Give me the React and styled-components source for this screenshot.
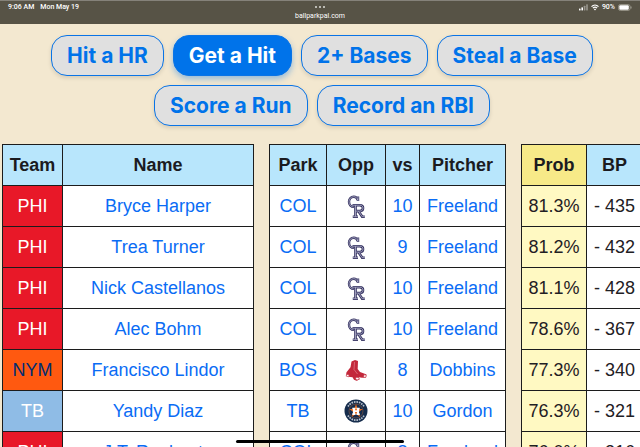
import React from "react";
import styled, { createGlobalStyle } from "styled-components";

const GlobalStyle = createGlobalStyle`
  * {
    box-sizing: border-box;
  }

  body {
    margin: 0;
    background: #f3e8d0;
    font-family: "Liberation Sans", Helvetica, Arial, sans-serif;
  }
`;

const Screen = styled.div`
  position: relative;
  display: flex;
  flex-direction: column;
  height: 100vh;
  overflow: hidden;
`;

const StatusBar = styled.header`
  display: grid;
  grid-template-columns: 1fr auto 1fr;
  flex: none;
  height: 24px;
  padding: 0 8px;
  border-top: 1px solid #85827a;
  background: #575346;
  color: #fff;
  font: 500 7px/12px Roboto, sans-serif;
`;

const Clock = styled.div`
  display: flex;
  gap: 6px;
`;

const Address = styled.div`
  display: flex;
  flex-direction: column;
  align-items: center;
  font-weight: 400;
  line-height: 10px;

  svg {
    display: block;
    margin: 5px 0 3px;
  }
`;

const Indicators = styled.div`
  display: flex;
  align-items: center;
  justify-content: flex-end;
  gap: 3px;
  height: 12px;
`;

const Content = styled.main`
  flex: 1;
  min-height: 0;
  overflow: hidden;
`;

const Tabs = styled.nav`
  display: flex;
  flex-wrap: wrap;
  justify-content: center;
  gap: 9px;
  padding: 11px 36px 18px 40px;
`;

const TabButton = styled.button`
  height: 41px;
  padding: 0 15px;
  border: 1px solid #0a74e6;
  border-radius: 16px;
  background: ${({ $active }) => ($active ? "#0073ea" : "#e0e0e0")};
  color: ${({ $active }) => ($active ? "#fff" : "#0073ea")};
  box-shadow: ${({ $active }) =>
    $active
      ? "0 3px 6px rgba(0, 115, 234, 0.4)"
      : "0 2px 4px rgba(0, 0, 0, 0.12)"};
  font: 700 21px/26px Inter, sans-serif;
  cursor: pointer;
`;

const TableWrapper = styled.div`
  padding-left: 2px;
`;

const Table = styled.table`
  width: 100%;
  min-width: 641px;
  table-layout: fixed;
  border-collapse: collapse;
  font-size: 18px;
  line-height: 24px;
  text-align: center;
  white-space: nowrap;
`;

const Col = styled.col`
  width: ${({ $width }) => ($width ? `${$width}px` : "auto")};
`;

const Row = styled.tr`
  height: 41px;
`;

const HeadCell = styled.th`
  padding: 0;
  border: 1px solid #1c1c1c;
  background: ${({ $highlight }) => ($highlight ? "#f7ea88" : "#b8e6fc")};
  color: #1b1b1f;
`;

const Cell = styled.td`
  padding: 0;
  border: 1px solid #1c1c1c;
  background: ${({ $highlight }) => ($highlight ? "#fff9c2" : "#fff")};
  color: #1f2024;

  a {
    color: #0a6cf5;
    text-decoration: none;
  }

  svg {
    display: block;
    margin: 0 auto;
  }
`;

const TeamCell = styled(Cell)`
  background: ${({ $team }) => $team.background};
  color: ${({ $team }) => $team.color};
`;

const Spacer = styled.td`
  padding: 0;
`;

const HomeIndicator = styled.div`
  position: absolute;
  bottom: 4px;
  left: 50%;
  width: 168px;
  height: 3px;
  border-radius: 2px;
  background: #000;
  transform: translateX(-50%);
`;

const teams = {
  PHI: { background: "#e81828", color: "#fff" },
  NYM: { background: "#ff5910", color: "#002d72" },
  TB: { background: "#8fbce6", color: "#fff" },
};

const tabs = [
  "Hit a HR",
  "Get a Hit",
  "2+ Bases",
  "Steal a Base",
  "Score a Run",
  "Record an RBI",
];

const players = [
  { team: "PHI", name: "Bryce Harper", park: "COL", opp: "COL", vs: 10, pitcher: "Freeland", prob: "81.3%", bp: "- 435" },
  { team: "PHI", name: "Trea Turner", park: "COL", opp: "COL", vs: 9, pitcher: "Freeland", prob: "81.2%", bp: "- 432" },
  { team: "PHI", name: "Nick Castellanos", park: "COL", opp: "COL", vs: 10, pitcher: "Freeland", prob: "81.1%", bp: "- 428" },
  { team: "PHI", name: "Alec Bohm", park: "COL", opp: "COL", vs: 10, pitcher: "Freeland", prob: "78.6%", bp: "- 367" },
  { team: "NYM", name: "Francisco Lindor", park: "BOS", opp: "BOS", vs: 8, pitcher: "Dobbins", prob: "77.3%", bp: "- 340" },
  { team: "TB", name: "Yandy Diaz", park: "TB", opp: "HOU", vs: 10, pitcher: "Gordon", prob: "76.3%", bp: "- 321" },
  { team: "PHI", name: "J.T. Realmuto", park: "COL", opp: "COL", vs: 8, pitcher: "Freeland", prob: "76.0%", bp: "- 316" },
];

const rockiesC = "M13 2.500v4.500M12.700 6C12 3.700 10.700 2.700 8.800 2.700 5.700 2.700 4 5 4 7.700c0 3 1.900 5.200 5 5.200";
const rockiesR = "M7.500 11.200h7.300c2.300 0 3.200 1.300 3.200 2.900s-1 3-3.200 3h-4M10.500 11.200v11.300M7.800 22.700h5.200M13.500 17.200l3.700 5.500h2.600";

function RockiesLogo() {
  return (
    <svg width="22" height="24" viewBox="0 0 22 24" fill="none" role="img" aria-label="Colorado">
      <path d={rockiesC} stroke="#33305f" strokeWidth="2.400" />
      <path d={rockiesC} stroke="#b9b9d0" strokeWidth=".8" />
      <path d={rockiesR} stroke="#33305f" strokeWidth="2.600" />
      <path d={rockiesR} stroke="#b9b9d0" strokeWidth=".8" />
    </svg>
  );
}

function RedSoxLogo() {
  return (
    <svg width="24" height="22" viewBox="0 0 24 22" role="img" aria-label="Boston">
      <path d="M7.500 2.500 11 1l3 1-.3 8 2.300 3 4 1.500 2.500 1-.5 3-4 .3-3-.6.5 2.300-3 1.300-2.500-1-1.500-2.500-4-.5-2.500-1.500.5-3 4-5z" fill="#c3283b" />
      <path d="m10.500 3-.5 7.500 3.500 4.500" fill="none" stroke="#e58f99" strokeWidth=".6" />
      <path d="m2.600 15.300 2.600.8-.5 1.700-2.500-.6zM12 18.300l2.700.2.500 1.700-2.200.8-1.500-1zM20 15.500l2.200.8-.4 2-2.300.2z" fill="#fff" stroke="#c3283b" strokeWidth=".6" />
    </svg>
  );
}

function AstrosLogo() {
  return (
    <svg width="24" height="24" viewBox="0 0 24 24" role="img" aria-label="Houston">
      <circle cx="12" cy="12" r="11.500" fill="#152c4c" />
      <path d="M4 7.500a9.200 9.200 0 0 1 16 0M4 16.500a9.200 9.200 0 0 0 16 0" fill="none" stroke="#b9c1cc" strokeWidth="1.700" strokeDasharray="1.600 .9" />
      <circle cx="12" cy="12" r="7" fill="#152c4c" stroke="#a9653f" strokeWidth=".5" />
      <path d="m12 5 1.700 5h5l-4 3 1.500 5L12 15l-4.200 3 1.500-5-4-3h5z" fill="#eb6e1f" />
      <path d="M8.300 8.700h3.200v1.600H11v1h2v-1h-.5V8.700h3.200v1.600h-.6v4h.6v1.600h-3.200v-1.600h.5v-1.300h-2v1.300h.5v1.600H8.300v-1.600h.6v-4h-.6z" fill="#fff" />
    </svg>
  );
}

const logos = { COL: RockiesLogo, BOS: RedSoxLogo, HOU: AstrosLogo };

function StatusIcons() {
  return (
    <Indicators>
      <svg width="9" height="7" viewBox="0 0 9 7" fill="#fff" aria-hidden="true">
        <rect y="4.500" width="1.600" height="2" rx=".4" />
        <rect x="2.400" y="3.300" width="1.600" height="3.200" rx=".4" />
        <rect x="4.800" y="1.800" width="1.600" height="4.700" rx=".4" opacity=".4" />
        <rect x="7.200" y=".3" width="1.600" height="6.200" rx=".4" opacity=".4" />
      </svg>
      <svg width="8" height="7" viewBox="0 0 8 7" fill="none" stroke="#fff" strokeWidth="1.200" aria-hidden="true">
        <path d="M.5 2.600c2-2 5-2 7 0M1.900 4.200c1.200-1.200 3-1.200 4.200 0" />
        <path d="M4 6.500 2.900 5.300c.6-.6 1.600-.6 2.200 0z" fill="#fff" stroke="none" />
      </svg>
      <span>90%</span>
      <svg width="14" height="7" viewBox="0 0 14 7" aria-hidden="true">
        <rect x=".5" y=".5" width="11.500" height="6" rx="1.800" fill="none" stroke="#aaa79c" strokeWidth=".7" />
        <rect x="1.300" y="1.300" width="9.500" height="4.400" rx="1" fill="#fff" />
        <path d="M13 2.500v2" stroke="#aaa79c" />
      </svg>
    </Indicators>
  );
}

function PlayerRow({ player }) {
  const Logo = logos[player.opp];

  return (
    <Row>
      <TeamCell $team={teams[player.team]}>{player.team}</TeamCell>
      <Cell>
        <a href="#player">{player.name}</a>
      </Cell>
      <Spacer />
      <Cell>
        <a href="#park">{player.park}</a>
      </Cell>
      <Cell>
        <Logo />
      </Cell>
      <Cell>
        <a href="#matchup">{player.vs}</a>
      </Cell>
      <Cell>
        <a href="#pitcher">{player.pitcher}</a>
      </Cell>
      <Spacer />
      <Cell $highlight>{player.prob}</Cell>
      <Cell>{player.bp}</Cell>
    </Row>
  );
}

export default function App() {
  const [activeTab, setActiveTab] = React.useState("Get a Hit");

  return (
    <Screen>
      <GlobalStyle />
      <StatusBar>
        <Clock>
          <span>9:06 AM</span>
          <span>Mon May 19</span>
        </Clock>
        <Address>
          <svg width="10" height="2" viewBox="0 0 10 2" fill="#dddcd8" aria-hidden="true">
            <circle cx="1" cy="1" r="1" />
            <circle cx="5" cy="1" r="1" />
            <circle cx="9" cy="1" r="1" />
          </svg>
          <span>ballparkpal.com</span>
        </Address>
        <StatusIcons />
      </StatusBar>
      <Content>
        <Tabs>
          {tabs.map((tab) => (
            <TabButton
              key={tab}
              type="button"
              $active={tab === activeTab}
              aria-pressed={tab === activeTab}
              onClick={() => setActiveTab(tab)}
            >
              {tab}
            </TabButton>
          ))}
        </Tabs>
        <TableWrapper>
          <Table>
            <colgroup>
              <Col $width={60} />
              <Col />
              <Col $width={16} />
              <Col $width={57} />
              <Col $width={59} />
              <Col $width={34} />
              <Col $width={86} />
              <Col $width={16} />
              <Col $width={65} />
              <Col $width={56} />
            </colgroup>
            <thead>
              <Row>
                <HeadCell>Team</HeadCell>
                <HeadCell>Name</HeadCell>
                <Spacer />
                <HeadCell>Park</HeadCell>
                <HeadCell>Opp</HeadCell>
                <HeadCell>vs</HeadCell>
                <HeadCell>Pitcher</HeadCell>
                <Spacer />
                <HeadCell $highlight>Prob</HeadCell>
                <HeadCell>BP</HeadCell>
              </Row>
            </thead>
            <tbody>
              {players.map((player) => (
                <PlayerRow key={player.name} player={player} />
              ))}
            </tbody>
          </Table>
        </TableWrapper>
      </Content>
      <HomeIndicator />
    </Screen>
  );
}
